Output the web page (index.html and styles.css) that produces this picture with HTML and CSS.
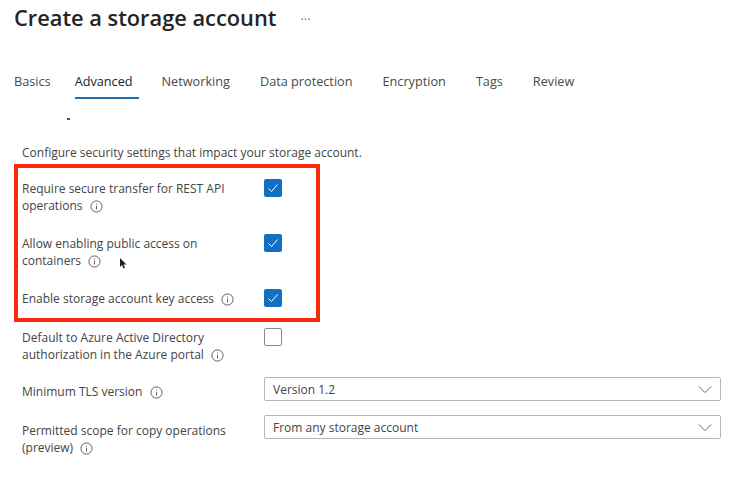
FILE: index.html
```html
<!DOCTYPE html>
<html lang="en">
<head>
  <meta charset="UTF-8" />
  <meta name="viewport" content="width=device-width, initial-scale=1.0"/>
  <title>Create a storage account</title>
  <link rel="stylesheet" href="styles.css">
</head>
<body>

  <header class="page-header">
    <h1>Create a storage account</h1>
    <span class="more">···</span>
  </header>

  <nav class="tabs">
    <a class="tab">Basics</a>
    <a class="tab active">Advanced</a>
    <a class="tab">Networking</a>
    <a class="tab">Data protection</a>
    <a class="tab">Encryption</a>
    <a class="tab">Tags</a>
    <a class="tab">Review</a>
  </nav>

  <div class="cut-off"></div>

  <main class="settings">
    <p class="intro">Configure security settings that impact your storage account.</p>

    <div class="row">
      <div class="label">Require secure transfer for REST API operations <svg class="info" viewBox="0 0 14 14"><circle cx="7" cy="7" r="6"/><path d="M7 6.2v4M7 3.8v1"/></svg></div>
      <span class="checkbox checked"><svg viewBox="0 0 18 18"><path d="M4.5 9.5l3 3 6-7"/></svg></span>
    </div>
    <div class="row">
      <div class="label">Allow enabling public access on containers <svg class="info" viewBox="0 0 14 14"><circle cx="7" cy="7" r="6"/><path d="M7 6.2v4M7 3.8v1"/></svg></div>
      <span class="checkbox checked"><svg viewBox="0 0 18 18"><path d="M4.5 9.5l3 3 6-7"/></svg></span>
    </div>
    <div class="row row-wide">
      <div class="label">Enable storage account key access <svg class="info" viewBox="0 0 14 14"><circle cx="7" cy="7" r="6"/><path d="M7 6.2v4M7 3.8v1"/></svg></div>
      <span class="checkbox checked"><svg viewBox="0 0 18 18"><path d="M4.5 9.5l3 3 6-7"/></svg></span>
    </div>
    <div class="row row-tight">
      <div class="label">Default to Azure Active Directory authorization in the Azure portal <svg class="info" viewBox="0 0 14 14"><circle cx="7" cy="7" r="6"/><path d="M7 6.2v4M7 3.8v1"/></svg></div>
      <span class="checkbox"></span>
    </div>
    <div class="row select-row first-select">
      <div class="label">Minimum TLS version <svg class="info" viewBox="0 0 14 14"><circle cx="7" cy="7" r="6"/><path d="M7 6.2v4M7 3.8v1"/></svg></div>
      <div class="select">Version 1.2 <svg class="chevron" viewBox="0 0 16 10"><path d="M1 1.5l7 7 7-7"/></svg></div>
    </div>
    <div class="row select-row last-select">
      <div class="label">Permitted scope for copy operations (preview) <svg class="info" viewBox="0 0 14 14"><circle cx="7" cy="7" r="6"/><path d="M7 6.2v4M7 3.8v1"/></svg></div>
      <div class="select">From any storage account <svg class="chevron" viewBox="0 0 16 10"><path d="M1 1.5l7 7 7-7"/></svg></div>
    </div>
  </main>

  <!-- annotation drawn over the page -->
  <div class="highlight"></div>
  <svg class="cursor" viewBox="0 0 8 12"><path d="M1 0v9l2-2 1.500 3.500 1.500-.7L4.500 6.500H7.500z"/></svg>

</body>
</html>
```

FILE: styles.css
```css
* { margin: 0; padding: 0; box-sizing: border-box; }

body {
  font-family: "Open Sans", "Liberation Sans", sans-serif;
  background-color: #fff;
  color: #444;
  font-size: 12px;
  line-height: 17px;
  overflow: hidden;
  height: 487px;
  position: relative;
}

.page-header {
  display: flex;
  align-items: center;
  height: 36px;
  padding-left: 14px;
}

h1 {
  font-size: 21.8px;
  font-weight: 600;
  line-height: 36px;
  color: #242424;
}

.more {
  margin-left: 24px;
  margin-top: 2px;
  font-size: 13px;
  color: #777;
}

.tabs {
  display: flex;
  gap: 30px;
  margin-top: 37px;
  padding-left: 14px;
  font-size: 12.700px;
}

.tab {
  padding-bottom: 6px;
  height: 26px;
  color: #4a4a4a;
}

.tab.active {
  margin: 0 -7px 0 -6px;
  padding-right: 6px;
  color: #222;
  border-bottom: 2px solid #1f6fb2;
}

.cut-off {
  width: 3px;
  height: 2px;
  background-color: #555;
  margin: 19px 0 0 67px;
}

.settings {
  padding: 24px 16px 0 22px;
}

.intro {
  margin-bottom: 19px;
}

.row {
  display: flex;
  align-items: flex-start;
  margin-bottom: 21px;
}

.row-wide {
  margin-bottom: 22px;
}

.row-tight {
  margin-bottom: 20px;
}

.label {
  width: 242px;
  padding-right: 18px;
}

.info {
  width: 13px;
  height: 13px;
  margin-left: 4px;
  vertical-align: -3px;
  fill: none;
  stroke: #555;
  stroke-width: 1;
}

.checkbox {
  width: 18px;
  height: 18px;
  margin-top: -1px;
  border: 1px solid #8a8a8a;
  border-radius: 2px;
  background-color: #fff;
}

.checkbox.checked {
  border: none;
  background-color: #1070c4;
}

.checkbox svg {
  display: block;
  width: 18px;
  height: 18px;
  fill: none;
  stroke: #fff;
  stroke-width: 1;
}

.select-row {
  margin-bottom: 14px;
}

.first-select {
  margin-top: -6px;
}

.select-row .label {
  padding-top: 6px;
}

.last-select .label {
  padding-top: 7px;
}

.select {
  flex: 1;
  display: flex;
  align-items: center;
  justify-content: space-between;
  height: 24px;
  padding: 0 8px;
  border: 1px solid #b5b5b5;
  border-radius: 2px;
}

.chevron {
  width: 14px;
  height: 9px;
  fill: none;
  stroke: #555;
  stroke-width: 1;
}

.highlight {
  position: absolute;
  left: 14px;
  top: 164px;
  width: 306px;
  height: 158px;
  border: 4px solid #fb2a0c;
}

.cursor {
  position: absolute;
  left: 119px;
  top: 258px;
  width: 8px;
  height: 12px;
  fill: #222;
}
```
